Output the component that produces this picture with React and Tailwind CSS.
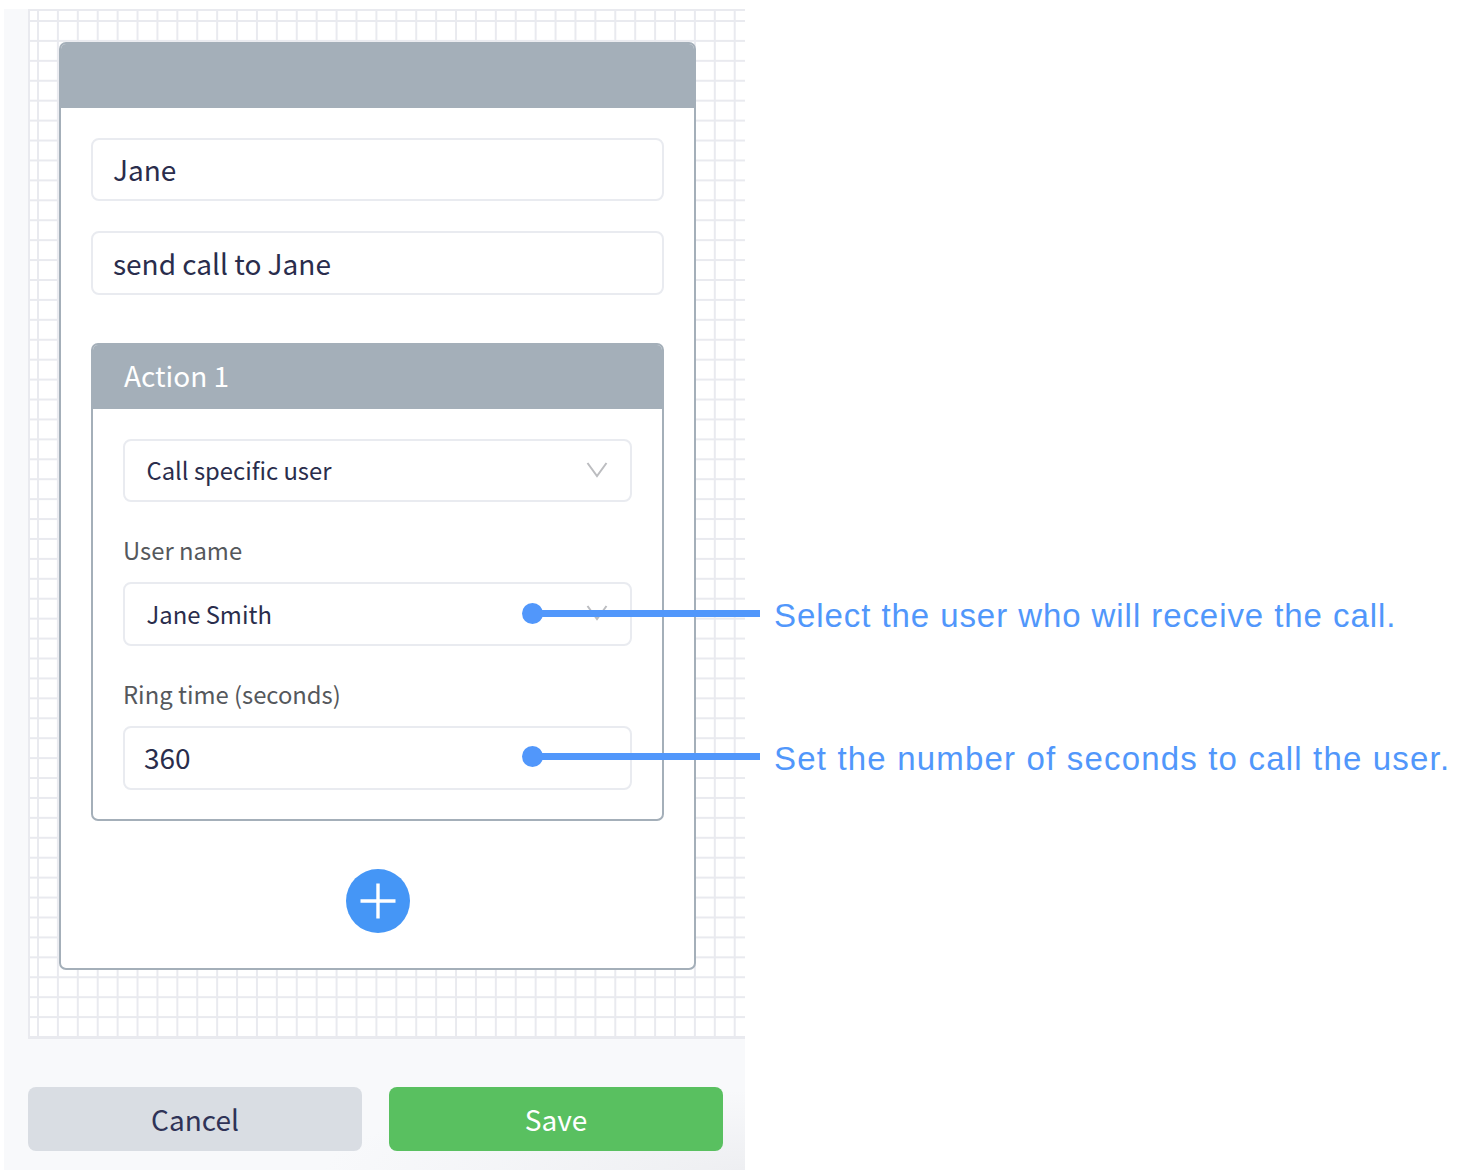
const sans = "font-['Noto_Sans_CJK_SC','Noto_Sans',sans-serif]";

function Chevron() {
  return (
    <svg width="22" height="16" viewBox="0 0 22 16" fill="none" className="absolute right-[22px] top-[21px]">
      <polyline points="1.5,1 11,14 20.5,1" stroke="#bcbdc0" strokeWidth="2" />
    </svg>
  );
}

function Field({ children, className = "", chevron = false }) {
  return (
    <div className={`relative flex items-center rounded-[8px] border-2 border-[#e9ebf0] bg-white text-[#2a2d4c] ${className}`}>
      {children}
      {chevron && <Chevron />}
    </div>
  );
}

function Label({ children, className = "" }) {
  return <div className={`h-[24px] text-[23.8px] leading-[24px] text-[#55585c] ${className}`}>{children}</div>;
}

function Callout({ top, text, className }) {
  return (
    <div className="absolute left-[522px] flex h-[21px] items-center" style={{ top }}>
      <div className="h-[21px] w-[21px] rounded-full bg-[#5197fb]" />
      <div className="-ml-px h-[7px] w-[218px] bg-[#5197fb]" />
      <div className={`relative top-[2px] ml-[14px] whitespace-nowrap font-['Liberation_Sans',sans-serif] text-[33px] leading-[40px] text-[#5197fb] ${className}`}>
        {text}
      </div>
    </div>
  );
}

export default function App() {
  return (
    <div className={`relative h-[1170px] w-[1460px] overflow-hidden bg-white ${sans}`}>
      <div className="ml-[4px] mt-[9px] flex h-[1161px] w-[741px] flex-col bg-[#f8f9fb] bg-[radial-gradient(ellipse_420px_80px_at_100%_100%,#eeeff2,#f8f9fb)] pl-[24px]">
        <div className="h-[1030px] w-[717px] border-b-2 border-l-2 border-t-2 border-[#e9eaef] bg-white bg-[linear-gradient(#e9eaef_2px,transparent_2px),linear-gradient(90deg,#e9eaef_2px,transparent_2px)] bg-[size:19.91px_19.93px] bg-[position:7px_9px] pl-[29px] pt-[31px]">
          <div className="h-[928px] w-[637px] overflow-hidden rounded-[7px] border-2 border-[#a4afb9] bg-white">
            <div className="h-[64px] bg-[#a4afb9]" />
            <div className="flex flex-col px-[30px] pt-[30px]">
              <Field className="h-[63px] pb-px pl-[20px] text-[28px]">Jane</Field>
              <Field className="mt-[30px] h-[64px] pb-px pl-[20px] text-[28px]">send call to Jane</Field>
              <div className="mt-[48px] h-[478px] overflow-hidden rounded-[7px] border-2 border-[#a4afb9]">
                <div className="flex h-[64px] items-center bg-[#a4afb9] pb-[5px] pl-[31px] text-[28px] text-white">Action 1</div>
                <div className="flex flex-col px-[30px] pt-[30px]">
                  <Field chevron className="h-[63px] pb-[2px] pl-[21.5px] text-[23.8px]">Call specific user</Field>
                  <Label className="mt-[36px]">User name</Label>
                  <Field chevron className="mt-[20px] h-[64px] pl-[21.5px] text-[23.8px]">Jane Smith</Field>
                  <Label className="mt-[36px]">Ring time (seconds)</Label>
                  <Field className="mt-[20px] h-[64px] pb-[2px] pl-[19px] text-[28px]">360</Field>
                </div>
              </div>
              <div className="mt-[48px] flex justify-center">
                <div className="flex h-[64px] w-[64px] items-center justify-center rounded-full bg-[#4596f6]">
                  <svg width="36" height="36" viewBox="0 0 36 36">
                    <path d="M18 0.5V35.5M0.5 18H35.5" stroke="#fff" strokeWidth="3.4" />
                  </svg>
                </div>
              </div>
            </div>
          </div>
        </div>
        <div className="mt-[48px] flex w-[695px] gap-[27px]">
          <div className="flex h-[64px] flex-1 items-center justify-center rounded-[8px] bg-[#d9dde3] text-[28px] text-[#2f3357]">Cancel</div>
          <div className="flex h-[64px] flex-1 items-center justify-center rounded-[8px] bg-[#59c060] text-[28px] text-white">Save</div>
        </div>
      </div>
      <Callout top="603px" className="tracking-[0.93px]" text="Select the user who will receive the call." />
      <Callout top="746px" className="tracking-[1.18px]" text="Set the number of seconds to call the user." />
    </div>
  );
}
